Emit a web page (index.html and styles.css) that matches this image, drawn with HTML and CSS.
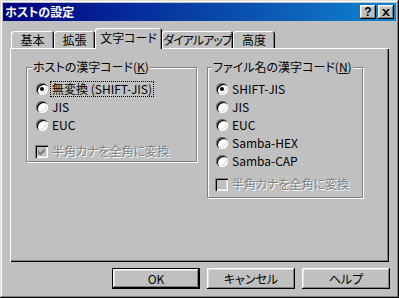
FILE: index.html
```html
<!DOCTYPE html>
<html lang="ja">
<head>
	<meta charset="UTF-8">
	<title>ホストの設定</title>
	<link rel="stylesheet" href="styles.css">
</head>
<body>
	<div class="window">
		<div class="titlebar">
			<span class="title">ホストの設定</span>
			<div class="caption-buttons">
				<button type="button" class="cap-btn help">?</button>
				<button type="button" class="cap-btn close">
					<svg width="8" height="7" viewBox="0 0 8 7"><path d="M0 0h2l2 2.2L6 0h2L5 3.5 8 7H6L4 4.8 2 7H0l3-3.5z" fill="#000"/></svg>
				</button>
			</div>
		</div>

		<div class="content">
			<div class="tabs">
				<div class="tab tab-basic">基本</div>
				<div class="tab tab-ext">拡張</div>
				<div class="tab tab-code selected">文字コード</div>
				<div class="tab tab-dial">ダイアルアップ</div>
				<div class="tab tab-adv">高度</div>
			</div>

			<div class="panel">
				<div class="group group-host">
					<span class="group-title">ホストの漢字コード(<u>K</u>)</span>
					<div class="option"><span class="radio checked"></span><span class="label focus">無変換 (SHIFT-JIS)</span></div>
					<div class="option"><span class="radio"></span><span class="label">JIS</span></div>
					<div class="option"><span class="radio"></span><span class="label">EUC</span></div>
					<div class="option check-row">
						<span class="checkbox">
							<svg width="7" height="7" viewBox="0 0 7 7"><path d="M0 2v3l2 2h1l4-4V0L2.5 4.5z" fill="#808080"/></svg>
						</span>
						<span class="label disabled">半角カナを全角に変換</span>
					</div>
				</div>

				<div class="group group-file">
					<span class="group-title">ファイル名の漢字コード(<u>N</u>)</span>
					<div class="option"><span class="radio checked"></span><span class="label">SHIFT-JIS</span></div>
					<div class="option"><span class="radio"></span><span class="label">JIS</span></div>
					<div class="option"><span class="radio"></span><span class="label">EUC</span></div>
					<div class="option"><span class="radio"></span><span class="label">Samba-HEX</span></div>
					<div class="option"><span class="radio"></span><span class="label">Samba-CAP</span></div>
					<div class="option check-row">
						<span class="checkbox"></span>
						<span class="label disabled">半角カナを全角に変換</span>
					</div>
				</div>
			</div>

			<div class="actions">
				<button type="button" class="btn default">OK</button>
				<button type="button" class="btn">キャンセル</button>
				<button type="button" class="btn">ヘルプ</button>
			</div>
		</div>
	</div>
</body>
</html>
```

FILE: styles.css
```css
* {
	box-sizing: border-box;
}

body {
	margin: 0;
	font-family: "Noto Sans CJK JP", sans-serif;
	font-size: 12px;
	line-height: 14px;
	font-feature-settings: "palt";
	color: #000;
}

/* Ventana */
.window {
	width: 399px;
	height: 298px;
	padding: 3px;
	background-color: #c0c0c0;
	box-shadow: inset -1px -1px #000, inset 1px 1px #dfdfdf, inset -2px -2px #808080, inset 2px 2px #fff;
}

.titlebar {
	height: 18px;
	display: flex;
	align-items: center;
	justify-content: space-between;
	padding: 0 2px 0 2px;
	background: linear-gradient(to right, #000080, #1084d0);
}

.title {
	color: #fff;
	font-weight: bold;
}

.caption-buttons {
	display: flex;
	gap: 2px;
}

.cap-btn {
	width: 16px;
	height: 14px;
	padding: 0;
	border: none;
	background-color: #c0c0c0;
	font-family: "Liberation Sans", sans-serif;
	font-size: 12px;
	font-weight: bold;
	line-height: 14px;
	display: flex;
	align-items: center;
	justify-content: center;
	box-shadow: inset -1px -1px #000, inset 1px 1px #fff, inset -2px -2px #808080, inset 2px 2px #dfdfdf;
}

.content {
	padding: 7px 7px 0 7px;
}

/* Pestañas */
.tabs {
	display: flex;
	align-items: flex-end;
	height: 20px;
	padding-left: 1px;
}

.tab {
	height: 17px;
	display: flex;
	align-items: center;
	justify-content: center;
	padding-top: 1px;
	white-space: nowrap;
	border-radius: 3px 3px 0 0;
	background-color: #c0c0c0;
	box-shadow: inset 1px 1px #fff, inset -1px 0 #000, inset -2px 0 #808080;
}

.tab.selected {
	position: relative;
	z-index: 1;
	height: 21px;
	margin-bottom: -1px;
	padding-top: 0;
	padding-bottom: 2px;
}

.tab-basic { width: 43px; }
.tab-ext { width: 41px; }
.tab-code { width: 67px; }
.tab-dial { width: 71px; letter-spacing: -1px; }
.tab-adv { width: 42px; }

.panel {
	height: 214px;
	display: flex;
	align-items: flex-start;
	gap: 10px;
	padding: 19px 0 0 16px;
	box-shadow: inset 1px 1px #fff, inset -1px -1px #000, inset -2px -2px #808080;
}

/* Grupos */
.group {
	position: relative;
	border: 1px solid #808080;
	box-shadow: inset 1px 1px #fff, 1px 1px #fff;
	padding-top: 12px;
}

.group-host {
	width: 171px;
	height: 95px;
	padding-left: 9px;
}

.group-file {
	width: 156px;
	height: 131px;
	padding-left: 8px;
}

.group-title {
	position: absolute;
	top: -8px;
	left: 5px;
	padding: 0 1px;
	background-color: #c0c0c0;
}

.group-file .group-title {
	left: 4px;
}

.option {
	display: flex;
	align-items: center;
	gap: 3px;
	height: 18px;
}

.label {
	padding: 0 1px;
	white-space: nowrap;
}

.label.focus {
	outline: 1px dotted #000;
}

.label.disabled {
	color: #808080;
	text-shadow: 1px 1px #fff;
}

.radio {
	position: relative;
	width: 12px;
	height: 12px;
	border-radius: 50%;
	background-color: #fff;
	box-shadow: inset 1px 1px #808080, inset 2px 2px #000, inset -1px -1px #fff, inset -2px -2px #dfdfdf;
}

.radio.checked::after {
	content: "";
	position: absolute;
	left: 4px;
	top: 4px;
	width: 4px;
	height: 4px;
	border-radius: 50%;
	background-color: #000;
}

.checkbox {
	width: 13px;
	height: 13px;
	margin-left: -1px;
	display: flex;
	align-items: center;
	justify-content: center;
	background-color: #c0c0c0;
	box-shadow: inset 1px 1px #808080, inset 2px 2px #000, inset -1px -1px #fff, inset -2px -2px #dfdfdf;
}

.group-host .check-row {
	margin-top: 8px;
}

.group-file .check-row {
	margin-top: 5px;
}

/* Botones */
.actions {
	display: flex;
	justify-content: flex-end;
	gap: 7px;
	margin: 6px -1px 0 0;
}

.btn {
	width: 88px;
	height: 21px;
	padding: 0;
	border: none;
	background-color: #c0c0c0;
	font-family: "Noto Sans CJK JP", sans-serif;
	font-size: 12px;
	font-feature-settings: "palt";
	color: #000;
	box-shadow: inset -1px -1px #000, inset 1px 1px #fff, inset -2px -2px #808080, inset 2px 2px #dfdfdf;
}

.btn.default {
	box-shadow: inset 0 0 0 1px #000, inset -2px -2px #000, inset 2px 2px #fff, inset -3px -3px #808080, inset 3px 3px #dfdfdf;
}
```
